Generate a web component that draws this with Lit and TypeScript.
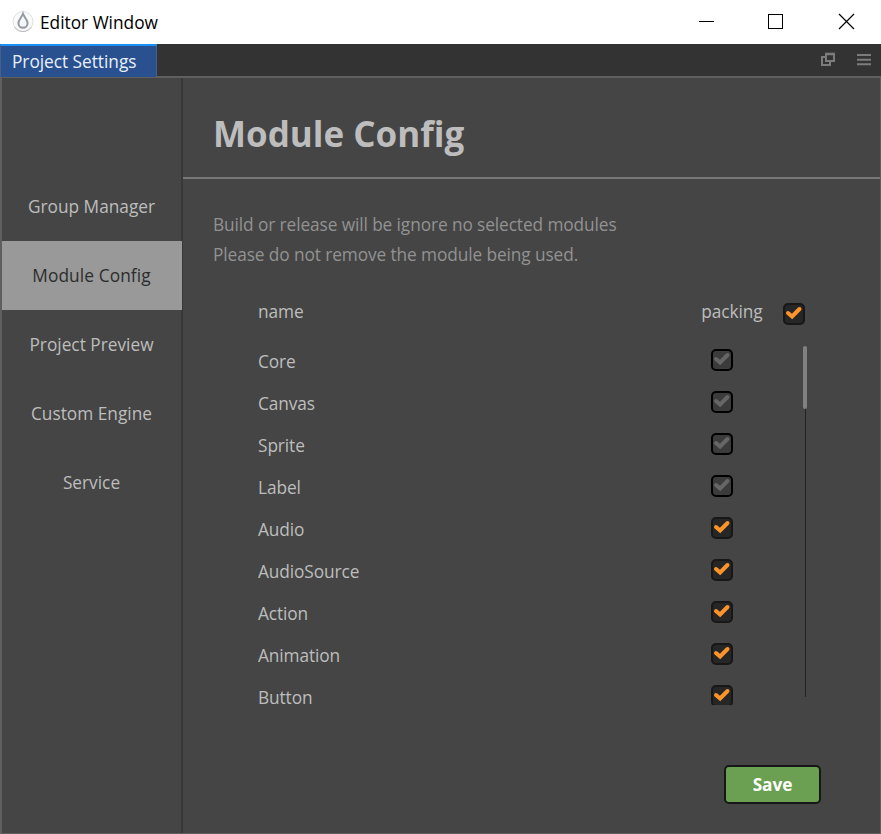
import { LitElement, html, css } from "lit";
import { customElement, property, state } from "lit/decorators.js";
import { classMap } from "lit/directives/class-map.js";

@customElement("check-box")
class CheckBox extends LitElement {
  @property({ type: Boolean }) locked = false;

  static styles = css`
    :host { display: block; width: 22px; height: 22px; }
    .box {
      box-sizing: border-box; width: 22px; height: 22px;
      border: 2px solid #171717; border-radius: 5px; background: #262626; color: #fd942b;
    }
    .locked { border-color: #000; background: #3b3b3b; color: #666; }
    svg { display: block; width: 18px; height: 18px; }
  `;

  render() {
    return html`<div class=${classMap({ box: true, locked: this.locked })}>
      <svg viewBox="0 0 18 18" fill="none" stroke="currentColor" stroke-width="4" stroke-linecap="round">
        <path d="M3 8 L7.1 11.5 L14.5 4" />
      </svg>
    </div>`;
  }
}

@customElement("app-root")
class AppRoot extends LitElement {
  @state() private sections = ["Group Manager", "Module Config", "Project Preview", "Custom Engine", "Service"];
  @state() private active = "Module Config";
  @state() private modules = [
    { name: "Core", locked: true },
    { name: "Canvas", locked: true },
    { name: "Sprite", locked: true },
    { name: "Label", locked: true },
    { name: "Audio", locked: false },
    { name: "AudioSource", locked: false },
    { name: "Action", locked: false },
    { name: "Animation", locked: false },
    { name: "Button", locked: false },
  ];

  static styles = css`
    * { box-sizing: border-box; }
    :host {
      display: flex; flex-direction: column; height: 834px; width: 881px; overflow: hidden;
      font-family: "Open Sans", "Noto Sans", sans-serif; font-size: 17.3px; line-height: 24px;
      letter-spacing: -0.1px; white-space: nowrap; color: #bdbdbd; background: #454545;
    }
    svg { display: block; }
    .title { height: 44px; flex: none; display: flex; background: #fff; color: #000; }
    .logo { margin: 10px 0 0 11px; }
    .caption { flex: 1; padding: 11px 0 0 5px; letter-spacing: 0; }
    .tabs { height: 34px; flex: none; display: flex; background: #333; border-bottom: 2px solid #5f5f5f; }
    .tab {
      width: 157px; height: 33px; padding: 4px 0 0 11px; background: #29508f; color: #eaf0fa;
      border-top: 2px solid #1c90f5; border-left: 1px solid #4a5f85; border-right: 1px solid #4a5f85;
      position: relative; letter-spacing: -0.03px;
    }
    .tools { display: flex; gap: 22px; margin: 8px 10px 0 auto; }
    .body { flex: 1; display: flex; min-height: 0; border: solid #5f5f5f; border-width: 0 1px 1px 2px; }
    .side { width: 181px; flex: none; padding-top: 94px; border-right: 2px solid #383838; }
    .item { width: 180px; height: 69px; line-height: 70px; padding-right: 1px; text-align: center; position: relative; letter-spacing: 0; }
    .on { background: #999; color: #2d2d2d; letter-spacing: 0.1px; }
    .main { flex: 1; min-width: 0; display: flex; flex-direction: column; }
    h1 {
      margin: 0; height: 101px; flex: none; padding: 30px 0 0 30px; border-bottom: 2px solid #777;
      font-size: 35px; line-height: 51px; font-weight: 700; letter-spacing: 0;
    }
    .note { margin: 31px 0 0 30px; line-height: 30px; color: #929292; }
    .head { display: flex; height: 69px; padding: 30px 75px 0 75px; }
    .head .name { flex: 1; }
    .head check-box { margin: 2.5px 0 0 20.5px; }
    .pane { display: flex; margin-left: 75px; height: 366px; overflow: hidden; }
    .list { width: 475px; flex: none; }
    .row { display: flex; justify-content: space-between; height: 42px; padding-top: 10px; }
    .row:last-child { height: 27px; }
    .row:last-child span { margin-top: 2px; padding: 0; line-height: 22px; }
    .row span { padding-top: 1px; }
    .track { width: 4px; height: 351px; margin: 7px 0 0 70px; background: linear-gradient(90deg, transparent 2px, #222 2px, #222 3px, transparent 3px); }
    .thumb { height: 63px; border-radius: 2px; background: #818181; }
    .save {
      width: 97px; height: 39px; margin: 60px 59px 0 auto; padding: 0; border: 2px solid #171717; border-radius: 5px;
      background: #6b9f51; color: #fff; font: 700 17.3px/34px "Open Sans", sans-serif; letter-spacing: -0.1px;
    }
  `;

  render() {
    return html`
      <div class="title">
        <svg class="logo" width="24" height="24" viewBox="0 0 24 24">
          <circle cx="12" cy="11.5" r="10" fill="#fafafa" stroke="#dfe0e2" />
          <path d="M3.5 17 A10.2 10.2 0 0 0 20.5 17" fill="none" stroke="#bcbec1" />
          <path d="M12 3.8 C10.8 7.3 7.4 9.6 7.4 13.2 A4.6 4.6 0 0 0 16.6 13.2 C16.6 9.6 13.2 7.3 12 3.8Z"
            fill="#f5f6f7" stroke="#9499a2" stroke-width="2" />
        </svg>
        <span class="caption">Editor Window</span>
        <svg width="182" height="44" viewBox="699 0 182 44" fill="none" stroke="#000">
          <path d="M699 21.5H714" />
          <rect x="768.5" y="14.5" width="14" height="14" />
          <path d="M839 14L854 29M854 14L839 29" stroke-width="1.2" />
        </svg>
      </div>
      <div class="tabs">
        <div class="tab">Project Settings</div>
        <div class="tools">
          <svg width="15" height="15" viewBox="0 0 15 15" fill="none" stroke="#7c7c7c">
            <path d="M5 5H2V13H10V10" stroke-width="2" />
            <rect x="6" y="2" width="8" height="7" stroke-width="2" />
            <path d="M5 2H15" stroke-width="2.6" />
          </svg>
          <svg width="14" height="15" viewBox="0 0 14 15" stroke="#7c7c7c" stroke-width="2">
            <path d="M0 3H14M0 7.8H14M0 12.2H14" />
          </svg>
        </div>
      </div>
      <div class="body">
        <div class="side">
          ${this.sections.map(s => html`<div class=${classMap({ item: true, on: s === this.active })}>${s}</div>`)}
        </div>
        <div class="main">
          <h1>Module Config</h1>
          <div class="note">Build or release will be ignore no selected modules<br />Please do not remove the module being used.</div>
          <div class="head"><span class="name">name</span><span>packing</span><check-box></check-box></div>
          <div class="pane">
            <div class="list">
              ${this.modules.map(m => html`<div class="row"><span>${m.name}</span><check-box ?locked=${m.locked}></check-box></div>`)}
            </div>
            <div class="track"><div class="thumb"></div></div>
          </div>
          <button class="save">Save</button>
        </div>
      </div>
    `;
  }
}
